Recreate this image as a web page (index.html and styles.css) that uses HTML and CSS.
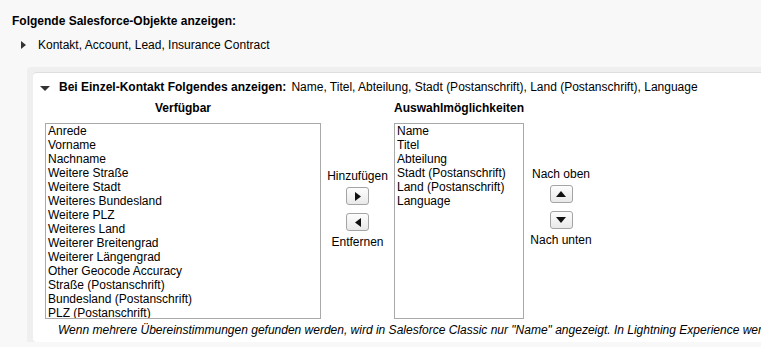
FILE: index.html
```html
<!DOCTYPE html>
<html lang="de">

<head>
    <meta charset="UTF-8">
    <meta name="viewport" content="width=device-width, initial-scale=1.0">
    <title>Salesforce-Objekte anzeigen</title>
    <link rel="stylesheet" href="styles.css">
</head>

<body>
    <div class="page">
        <h1 class="title">Folgende Salesforce-Objekte anzeigen:</h1>

        <!-- zugeklappte Zeile -->
        <div class="objects">
            <span class="tri-right"></span>
            <span>Kontakt, Account, Lead, Insurance Contract</span>
        </div>

        <div class="outer">
            <div class="panel">
                <!-- aufgeklappter Kontakt-Bereich -->
                <div class="panel-head">
                    <span class="tri-down"></span>
                    <b>Bei Einzel-Kontakt Folgendes anzeigen:</b>
                    <span class="selected">Name, Titel, Abteilung, Stadt (Postanschrift), Land (Postanschrift), Language</span>
                </div>

                <div class="picker">
                    <div class="col-title">Verfügbar</div>
                    <div></div>
                    <div class="col-title">Auswahlmöglichkeiten</div>
                    <div></div>

                    <ul class="list list-left">
                        <li>Anrede</li>
                        <li>Vorname</li>
                        <li>Nachname</li>
                        <li>Weitere Straße</li>
                        <li>Weitere Stadt</li>
                        <li>Weiteres Bundesland</li>
                        <li>Weitere PLZ</li>
                        <li>Weiteres Land</li>
                        <li>Weiterer Breitengrad</li>
                        <li>Weiterer Längengrad</li>
                        <li>Other Geocode Accuracy</li>
                        <li>Straße (Postanschrift)</li>
                        <li>Bundesland (Postanschrift)</li>
                        <li>PLZ (Postanschrift)</li>
                    </ul>

                    <div class="buttons buttons-move">
                        <span>Hinzufügen</span>
                        <button class="arrow-btn first" title="Hinzufügen">
                            <svg width="6" height="9" viewBox="0 0 6 9"><polygon points="0,0 6,4.5 0,9" /></svg>
                        </button>
                        <button class="arrow-btn second" title="Entfernen">
                            <svg width="6" height="9" viewBox="0 0 6 9"><polygon points="6,0 0,4.5 6,9" /></svg>
                        </button>
                        <span class="under">Entfernen</span>
                    </div>

                    <ul class="list list-right">
                        <li>Name</li>
                        <li>Titel</li>
                        <li>Abteilung</li>
                        <li>Stadt (Postanschrift)</li>
                        <li>Land (Postanschrift)</li>
                        <li>Language</li>
                    </ul>

                    <div class="buttons buttons-order">
                        <span>Nach oben</span>
                        <button class="arrow-btn first" title="Nach oben">
                            <svg width="10" height="6" viewBox="0 0 10 6"><polygon points="0,6 5,0 10,6" /></svg>
                        </button>
                        <button class="arrow-btn second" title="Nach unten">
                            <svg width="10" height="6" viewBox="0 0 10 6"><polygon points="0,0 10,0 5,6" /></svg>
                        </button>
                        <span class="under">Nach unten</span>
                    </div>
                </div>

                <p class="note">Wenn mehrere Übereinstimmungen gefunden werden, wird in Salesforce Classic nur "Name" angezeigt. In Lightning Experience werden die ausgewählten Felder angezeigt.</p>
            </div>
        </div>
    </div>
</body>

</html>
```

FILE: styles.css
```css
/* Grundlayout */
body {
    margin: 0;
    padding: 0;
    background: #f8f8f8;
    font-family: "Liberation Sans", Arial, sans-serif;
    font-size: 12px;
    line-height: 14px;
    color: #000;
    overflow: hidden;
    height: 347px;
}

.page {
    padding: 14px 0 0 12px;
}

.title {
    margin: 0;
    font-size: 12px;
    line-height: 14px;
    font-weight: bold;
}

/* Zeile mit den Objekten */
.objects {
    margin-top: 10px;
    display: flex;
    align-items: center;
    height: 14px;
}

.tri-right {
    width: 0;
    height: 0;
    margin-left: 9px;
    margin-right: 12px;
    border-top: 4px solid transparent;
    border-bottom: 4px solid transparent;
    border-left: 5px solid #333;
}

.tri-down {
    width: 0;
    height: 0;
    margin-left: 7px;
    margin-right: 9px;
    border-left: 5px solid transparent;
    border-right: 5px solid transparent;
    border-top: 5px solid #333;
    position: relative;
    top: 1px;
}

/* grauer Rahmen */
.outer {
    margin-top: 15px;
    margin-left: 15px;
    background: #efefef;
    padding: 5px 0 0 6px;
    border-radius: 4px 0 0 0;
}

.panel {
    background: #fff;
    border-top: 1px solid #dedede;
    border-radius: 4px 0 0 4px;
    padding: 7px 0 5px 0;
    white-space: nowrap;
}

.panel-head {
    display: flex;
    align-items: center;
    height: 14px;
}

.panel-head b {
    margin-right: 5px;
}

/* Auswahl-Liste */
.picker {
    display: grid;
    grid-template-columns: 276px 73px 130px 74px;
    grid-template-rows: 14px 196px;
    row-gap: 8px;
    margin: 7px 0 0 12px;
}

.col-title {
    font-weight: bold;
    text-align: center;
}

.list {
    list-style: none;
    margin: 0;
    padding: 0 2px;
    border: 1px solid #a9a9a9;
    overflow: hidden;
}

.list li {
    height: 14px;
}

.buttons {
    display: flex;
    flex-direction: column;
    align-items: center;
}

.buttons-move {
    padding-top: 46px;
}

.buttons-order {
    padding-top: 44px;
}

.arrow-btn {
    width: 23px;
    height: 18px;
    padding: 0;
    border: 1px solid #a4a4a4;
    border-radius: 3px;
    background: linear-gradient(#fdfdfd, #e9e9e9);
    display: flex;
    align-items: center;
    justify-content: center;
}

.arrow-btn svg {
    fill: #111;
}

.arrow-btn.first {
    margin-top: 4px;
}

.arrow-btn.second {
    margin-top: 8px;
}

.under {
    margin-top: 4px;
}

.note {
    margin: 4px 0 0 25px;
    font-style: italic;
}
```
